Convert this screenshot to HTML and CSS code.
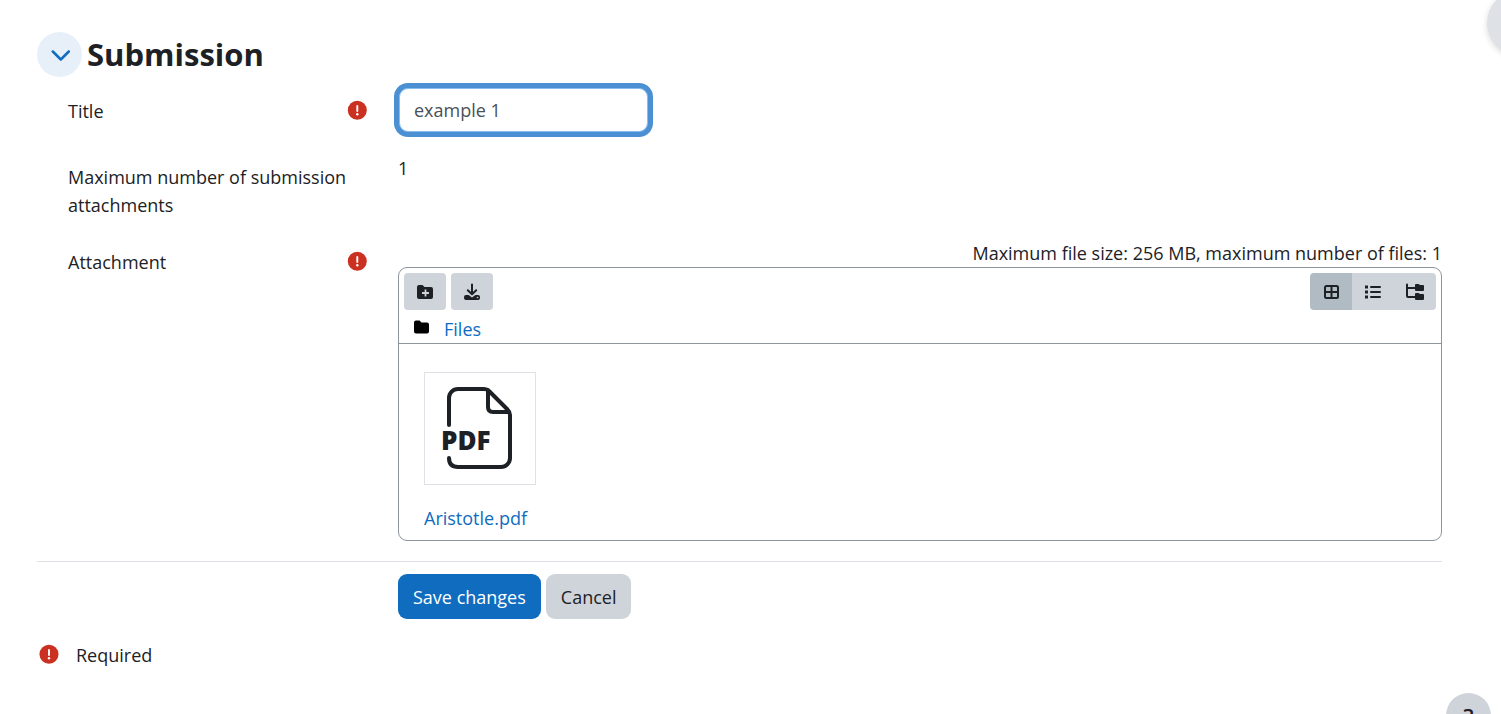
FILE: index.html
```
<!DOCTYPE html>
<html lang="en">
  <head>
    <meta charset="UTF-8" />
    <meta name="viewport" content="width=device-width, initial-scale=1.0" />
    <title>Submission</title>
    <link rel="stylesheet" href="styles.css">
  </head>
  <body>
    <form class="submission">
      <div class="section-header">
        <button type="button" class="toggle" aria-label="Collapse" aria-expanded="true">
          <svg width="20" height="12" viewBox="0 0 20 12"><path d="M2.800 2.500l8 8 8-8" fill="none" stroke="#0f6cbf" stroke-width="2.500" stroke-linecap="round" stroke-linejoin="round" /></svg>
        </button>
        <h1>Submission</h1>
      </div>

      <div class="row">
        <div class="row-label">
          <label for="title">Title</label>
          <svg class="required-icon" viewBox="0 0 20 20" role="img" aria-label="Required"><circle cx="10.300" cy="10.300" r="9.500" fill="#ca3120" /><path d="M10.300 6v5" stroke="#fff" stroke-width="1.900" stroke-linecap="round" /><circle cx="10.300" cy="14.200" r="1.200" fill="#fff" /></svg>
        </div>
        <div class="row-field">
          <input type="text" id="title" class="text-input" value="example 1" />
        </div>
      </div>

      <div class="row">
        <div class="row-label"><span>Maximum number of submission attachments</span></div>
        <div class="row-field">1</div>
      </div>

      <div class="row">
        <div class="row-label">
          <span>Attachment</span>
          <svg class="required-icon" viewBox="0 0 20 20" role="img" aria-label="Required"><circle cx="10.300" cy="10.300" r="9.500" fill="#ca3120" /><path d="M10.300 6v5" stroke="#fff" stroke-width="1.900" stroke-linecap="round" /><circle cx="10.300" cy="14.200" r="1.200" fill="#fff" /></svg>
        </div>
        <div class="row-field">
          <p class="restrictions">Maximum file size: 256 MB, maximum number of files: 1</p>
          <div class="filemanager">
            <div class="toolbar">
              <div class="actions">
                <button type="button" class="tool" aria-label="Create folder">
                  <svg width="18" height="18" viewBox="0 0 18 18"><path d="M1 4a2 2 0 0 1 2-2h3.500l2 2H15a2 2 0 0 1 2 2v8a2 2 0 0 1-2 2H3a2 2 0 0 1-2-2z" fill="#1d2125" /><path d="M9.500 6.500v7M6 10h7" stroke="#ced4da" stroke-width="1.800" /></svg>
                </button>
                <button type="button" class="tool" aria-label="Download all">
                  <svg width="18" height="18" viewBox="0 0 18 18"><path d="M9 1.500v9.500M4.800 7.200L9 11.300l4.200-4.100" fill="none" stroke="#1d2125" stroke-width="2" stroke-linecap="round" stroke-linejoin="round" /><path d="M3 12h2.600L9 14.500l3.400-2.500H15a2 2 0 0 1 2 2v1a2 2 0 0 1-2 2H3a2 2 0 0 1-2-2v-1a2 2 0 0 1 2-2z" fill="#1d2125" /><circle cx="14.500" cy="14.500" r=".8" fill="#ced4da" /></svg>
                </button>
              </div>
              <div class="views">
                <button type="button" class="tool active" aria-label="Icons view">
                  <svg width="18" height="18" viewBox="0 0 18 18"><path d="M9.500 3v12M3 9h13M4.500 3h10a1.500 1.500 0 0 1 1.500 1.500v9a1.500 1.500 0 0 1-1.500 1.500h-10A1.500 1.500 0 0 1 3 13.500v-9A1.500 1.500 0 0 1 4.500 3z" fill="none" stroke="#1d2125" stroke-width="2" /></svg>
                </button>
                <button type="button" class="tool" aria-label="List view">
                  <svg width="18" height="18" viewBox="0 0 18 18" fill="#1d2125"><path d="M1 2.500h3v3H1zM1 7.500h3v3H1zM1 12.500h3v3H1z" /><path d="M7 4h9M7 9h9M7 14h9" stroke="#1d2125" stroke-width="2" stroke-linecap="round" /></svg>
                </button>
                <button type="button" class="tool" aria-label="Tree view">
                  <svg width="20" height="18" viewBox="0 0 20 18"><path d="M2 1.500v11.500a1 1 0 0 0 1 1h7M2 5h8" fill="none" stroke="#1d2125" stroke-width="2" stroke-linecap="round" /><path d="M10 2a1 1 0 0 1 1-1h2.500L15 2h3a1 1 0 0 1 1 1v4a1 1 0 0 1-1 1h-7a1 1 0 0 1-1-1zM10 11a1 1 0 0 1 1-1h2.500l1.500 1h3a1 1 0 0 1 1 1V16a1 1 0 0 1-1 1h-7a1 1 0 0 1-1-1z" fill="#1d2125" /></svg>
                </button>
              </div>
            </div>
            <div class="path">
              <svg width="16" height="18" viewBox="0 0 16 18"><path d="M0 2.500a2 2 0 0 1 2-2h3.500l2 2H13a2 2 0 0 1 2 2v7a2 2 0 0 1-2 2H2a2 2 0 0 1-2-2z" fill="#000" /></svg>
              <a href="#">Files</a>
            </div>
            <div class="files">
              <a href="#" class="file">
                <span class="thumbnail">
                  <svg width="80" height="84" viewBox="0 0 80 84">
                    <path d="M9 38V11a9 9 0 0 1 9-9h26q3 0 5 2l18 18q3 3 3 6v43a9 9 0 0 1-9 9H18q-9 0-9-9M48 3v17q0 5 5 5h16" fill="none" stroke="#1d2125" stroke-width="4" stroke-linecap="round" stroke-linejoin="round" />
                    <text class="thumbnail-text" x="1" y="63">PDF</text>
                  </svg>
                </span>
                Aristotle.pdf
              </a>
            </div>
          </div>
        </div>
      </div>

      <div class="row form-actions">
        <div class="row-field">
          <button type="submit" class="btn btn-primary">Save changes</button>
          <button type="button" class="btn">Cancel</button>
        </div>
      </div>

      <div class="required-note">
        <svg class="required-icon" viewBox="0 0 20 20" aria-hidden="true"><circle cx="10" cy="10.300" r="9.500" fill="#ca3120" /><path d="M10 6v5" stroke="#fff" stroke-width="1.900" stroke-linecap="round" /><circle cx="10" cy="14.200" r="1.200" fill="#fff" /></svg>
        <span>Required</span>
      </div>
    </form>

    <!-- Floating buttons -->
    <button type="button" class="drawer-toggle" aria-label="Open block drawer"></button>
    <button type="button" class="help-button" aria-label="Help">?</button>
  </body>
</html>
```

FILE: styles.css
```
* {
  box-sizing: border-box;
  margin: 0;
  padding: 0;
}

body {
  font-family: "Segoe UI", "Open Sans", sans-serif;
  font-size: 18px;
  line-height: 28px;
  color: #1d2125;
  background-color: #fff;
  overflow: hidden;
}

button,
input {
  font: inherit;
  color: inherit;
  border: none;
}

button {
  cursor: pointer;
}

svg {
  flex-shrink: 0;
}

a {
  color: #0f6cbf;
  text-decoration: none;
}

.submission {
  padding: 32px 59px 32px 37px;
}

.section-header {
  display: flex;
  align-items: center;
  gap: 5px;
  margin-bottom: 11px;
}

.section-header h1 {
  font-size: 31px;
  font-weight: 700;
  line-height: 45px;
}

.toggle {
  display: flex;
  align-items: center;
  justify-content: center;
  width: 45px;
  height: 45px;
  border-radius: 50%;
  background-color: #e7f0f9;
}

.row {
  display: grid;
  grid-template-columns: 299px 1fr;
  column-gap: 31px;
  padding-left: 31px;
  margin-bottom: 20px;
}

.row-label {
  display: flex;
  align-items: flex-start;
  justify-content: space-between;
  gap: 8px;
  padding-top: 9px;
}

.required-icon {
  width: 20px;
  height: 20px;
  margin-top: 3px;
}

.text-input {
  display: block;
  width: 249px;
  height: 44px;
  padding: 8px 14px;
  color: #495057;
  border: 1px solid #86bdf0;
  border-radius: 9px;
  box-shadow: 0 0 0 5px #4a90d2;
  outline: none;
}

.row-field {
  min-width: 0;
}

.row-field .text-input {
  margin: 0 1px 2px;
}

.restrictions {
  text-align: right;
}

.filemanager {
  border: 1px solid #8f959e;
  border-radius: 9px;
}

.toolbar {
  display: flex;
  justify-content: space-between;
  padding: 5px;
}

.actions {
  display: flex;
  gap: 5px;
}

.views {
  display: flex;
  border-radius: 4px;
  overflow: hidden;
}

.tool {
  display: flex;
  align-items: center;
  justify-content: center;
  width: 42px;
  height: 37px;
  background-color: #ced4da;
}

.actions .tool {
  border-radius: 4px;
}

.tool.active {
  background-color: #b1bbc4;
}

.path {
  display: flex;
  align-items: center;
  gap: 14px;
  padding: 0 15px;
  border-bottom: 1px solid #8f959e;
}

.files {
  padding: 28px 25px 8px;
}

.file {
  display: inline-flex;
  flex-direction: column;
  gap: 19px;
}

.thumbnail {
  display: flex;
  align-items: center;
  justify-content: center;
  width: 112px;
  height: 113px;
  border: 1px solid #dee2e6;
}

.thumbnail-text {
  font-family: "Open Sans", sans-serif;
  font-size: 26px;
  font-weight: 800;
  fill: #1d2125;
}

.form-actions {
  grid-template-columns: 1fr;
  margin-bottom: 22px;
  padding-top: 12px;
  padding-left: 361px;
  border-top: 1px solid #dee2e6;
}

.form-actions .row-field {
  display: flex;
  gap: 5px;
}

.btn {
  height: 45px;
  padding: 0 15px;
  border-radius: 9px;
  background-color: #ced4da;
}

.btn-primary {
  color: #fff;
  background-color: #0f6cbf;
}

.required-note {
  display: flex;
  gap: 17px;
  padding-left: 2px;
}

.drawer-toggle {
  position: fixed;
  top: -10px;
  right: -52px;
  width: 66px;
  height: 66px;
  border-radius: 50%;
  background-color: #dee2e6;
  box-shadow: 0 2px 6px rgba(0, 0, 0, 0.15);
}

.help-button {
  position: fixed;
  right: 10px;
  bottom: -24px;
  width: 45px;
  height: 45px;
  border-radius: 50%;
  background-color: #ced4da;
  font-size: 22px;
  font-weight: 600;
}
```
